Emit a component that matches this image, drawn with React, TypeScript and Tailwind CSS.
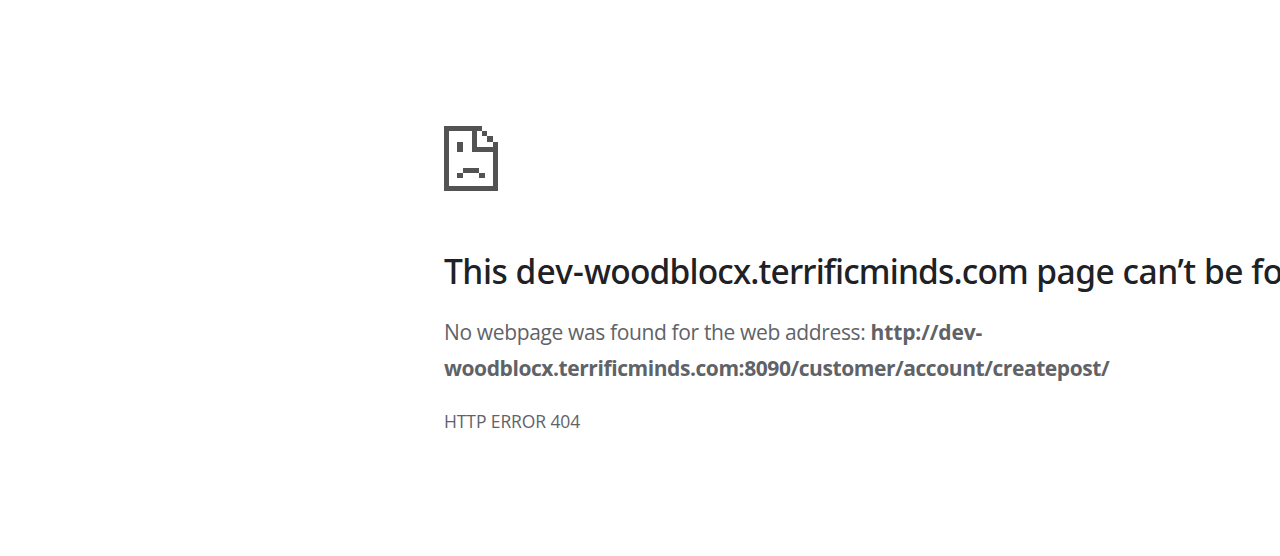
function SadPageIcon() {
  return (
    <svg
      className="block h-[66px] w-[54px]"
      viewBox="0 0 54 66"
      fill="#535353"
      shapeRendering="crispEdges"
      aria-hidden="true"
    >
      <path d="M0 1H38V6H33V22H49V17H54V66H0ZM5 6V61H49V27H28V6Z" fillRule="evenodd" />
      <path d="M38 6h5v5h-5zM43 11h6v6h-6zM13 17h6v10h-6zM19 43h16v5H19zM13 48h6v5h-6zM35 48h6v5h-6z" />
    </svg>
  );
}

export default function App() {
  return (
    <main className="h-[556px] w-full overflow-hidden bg-white pt-[125px] pl-[444px] font-['Open_Sans','Noto_Sans',sans-serif] text-[#5f6368]">
      <SadPageIcon />
      <h1 className="mt-[59px] font-['Noto_Sans','Open_Sans',sans-serif] text-[33.5px] leading-[43px] font-medium tracking-[-0.47px] whitespace-nowrap text-[#202124]">
        This <span className="tracking-[0.2px]">dev-</span>
        <span className="tracking-[-0.83px]">woodblocx.terrificminds.com</span>
        <span className="tracking-[-0.45px]"> page can’t be found</span>
      </h1>
      <div className="mt-[21px] text-[21px] leading-9">
        <p className="whitespace-nowrap">
          <span className="tracking-[-0.36px]">No webpage was found for the web address: </span>
          <strong className="tracking-[-0.12px]">http://dev-</strong>
        </p>
        <p className="whitespace-nowrap">
          <strong className="tracking-[-0.43px]">woodblocx.terrificminds.com:8090/customer/account/createpost/</strong>
        </p>
      </div>
      <p className="mt-[21px] text-[17.5px] leading-[28px] tracking-[-0.1px]">HTTP ERROR 404</p>
    </main>
  );
}
